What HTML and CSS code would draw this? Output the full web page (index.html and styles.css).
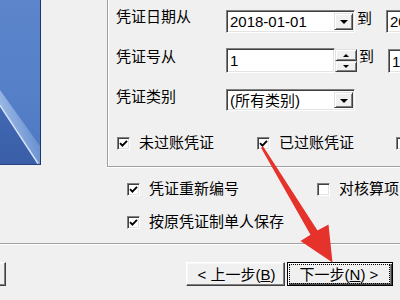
FILE: index.html
```html
<!DOCTYPE html>
<html>
<head>
<meta charset="utf-8">
<link rel="stylesheet" href="styles.css">
</head>
<body>
<div class="dlg">
  <div class="top">
    <div class="banner">
      <svg width="40" height="164" viewBox="0 0 40 164">
        <defs>
          <linearGradient id="bg" x1="0" y1="0" x2="0" y2="1">
            <stop offset="0" stop-color="#5c85cb"/>
            <stop offset="0.6" stop-color="#5580c8"/>
            <stop offset="1" stop-color="#4d78c2"/>
          </linearGradient>
          <linearGradient id="sheen" x1="1" y1="0" x2="0" y2="0.6">
            <stop offset="0" stop-color="#9dbbe8" stop-opacity="0"/>
            <stop offset="1" stop-color="#b9d0f0" stop-opacity="0.9"/>
          </linearGradient>
          <linearGradient id="dark" x1="0" y1="0" x2="0" y2="1">
            <stop offset="0" stop-color="#4268b3"/>
            <stop offset="1" stop-color="#3a5ea8"/>
          </linearGradient>
        </defs>
        <rect width="40" height="164" fill="url(#bg)"/>
        <polygon points="0,90 40,146 40,164 38,164 0,106" fill="url(#sheen)"/>
        <polygon points="0,106 38,164 0,164" fill="url(#dark)"/>
        <line x1="0" y1="105.5" x2="38" y2="163.5" stroke="#d6e4f8" stroke-width="1.4"/>
      </svg>
    </div>
    <div class="group">
      <div class="row r1">
        <span class="lbl">凭证日期从</span>
        <div class="field combo"><span class="val">2018-01-01</span><span class="dd"><i class="tri"></i></span></div>
        <span class="to">到</span>
        <div class="field combo"><span class="val">2018-01-31</span><span class="dd"><i class="tri"></i></span></div>
      </div>
      <div class="row r2">
        <span class="lbl">凭证号从</span>
        <div class="spinbox">
          <div class="field num"><span class="val">1</span></div>
          <div class="spin">
            <span class="sbtn"><i class="tri up"></i></span>
            <span class="sbtn"><i class="tri sm"></i></span>
          </div>
        </div>
        <span class="to">到</span>
        <div class="field num2"><span class="val">100</span></div>
      </div>
      <div class="row r3">
        <span class="lbl">凭证类别</span>
        <div class="field combo short"><span class="val">(所有类别)</span><span class="dd"><i class="tri"></i></span></div>
      </div>
      <div class="checks">
        <label class="chk w140"><span class="box on"><svg width="9" height="9" viewBox="0 0 9 9"><path d="M1 4.2 L3.4 6.6 L8 1.8" fill="none" stroke="#000" stroke-width="1.9"/></svg></span><span>未过账凭证</span></label>
        <label class="chk w139"><span class="box on"><svg width="9" height="9" viewBox="0 0 9 9"><path d="M1 4.2 L3.4 6.6 L8 1.8" fill="none" stroke="#000" stroke-width="1.9"/></svg></span><span>已过账凭证</span></label>
        <label class="chk"><span class="box"></span><span>作废凭证</span></label>
      </div>
    </div>
  </div>

  <div class="opts">
    <div class="orow">
      <label class="chk w190"><span class="box on"><svg width="9" height="9" viewBox="0 0 9 9"><path d="M1 4.2 L3.4 6.6 L8 1.8" fill="none" stroke="#000" stroke-width="1.9"/></svg></span><span>凭证重新编号</span></label>
      <label class="chk"><span class="box"></span><span>对核算项目</span></label>
    </div>
    <div class="orow">
      <label class="chk"><span class="box on"><svg width="9" height="9" viewBox="0 0 9 9"><path d="M1 4.2 L3.4 6.6 L8 1.8" fill="none" stroke="#000" stroke-width="1.9"/></svg></span><span>按原凭证制单人保存</span></label>
    </div>
  </div>

  <div class="sep"></div>

  <div class="btns">
    <button class="btn cut"></button>
    <button class="btn back">&lt; 上一步(<u>B</u>)</button>
    <button class="btn next"><span class="focus">下一步(<u>N</u>) &gt;</span></button>
  </div>
</div>

<svg class="arrow" width="400" height="300" viewBox="0 0 400 300">
  <defs>
    <filter id="soft" x="-10%" y="-10%" width="120%" height="120%"><feGaussianBlur stdDeviation="0.6"/></filter>
  </defs>
  <polygon filter="url(#soft)" fill="#e5302b"
    points="261,147.8 263.2,146.4 317.5,230.5 328.5,224.5 332.5,262.5 300.5,241 310.5,234.8"/>
</svg>
</body>
</html>
```

FILE: styles.css
```css
html, body {
  margin: 0;
  padding: 0;
  width: 400px;
  height: 300px;
  overflow: hidden;
  background: #f0f0f0;
}

body {
  font-family: "Liberation Sans", "Noto Sans CJK SC", sans-serif;
  font-size: 15px;
  line-height: 17px;
  color: #000;
  position: relative;
}

.dlg {
  width: 520px;
}

.top {
  display: flex;
  align-items: flex-start;
  height: 168px;
}

.banner {
  width: 40px;
  height: 164px;
  border-right: 1px solid #1d3768;
  border-bottom: 1px solid #2a4680;
  margin-right: 66px;
  flex: none;
}

.banner svg {
  display: block;
}

.group {
  flex: none;
  width: 400px;
  height: 166px;
  border-left: 1px solid #a0a0a0;
  border-bottom: 1px solid #a0a0a0;
  box-shadow: inset 1px 0 #fff, 0 1px #fff;
  padding-left: 8px;
  box-sizing: content-box;
}

.row {
  display: flex;
  align-items: flex-start;
}

.r1 { margin-top: 10px; height: 23px; }
.r2 { margin-top: 15px; height: 25px; }
.r3 { margin-top: 16px; height: 21px; }

.lbl {
  width: 110px;
  flex: none;
}
.r1 .lbl { margin-top: -2px; }
.r2 .lbl { margin-top: 0; }
.r3 .lbl { margin-top: -1px; }

.to {
  width: 29px;
  padding-left: 2px;
  flex: none;
}

.field {
  box-sizing: border-box;
  background: #fff;
  border: 1px solid;
  border-color: #808080 #fff #fff #808080;
  box-shadow: inset 1px 1px #404040, inset -1px -1px #e3e3e3;
  display: flex;
  align-items: center;
  flex: none;
  overflow: hidden;
}

.val {
  flex: 1;
  padding-left: 3px;
  white-space: nowrap;
}

.combo {
  width: 129px;
  height: 23px;
}

.combo.short {
  height: 22px;
}

.dd {
  width: 19px;
  align-self: stretch;
  margin: 2px 1px 2px 0;
  box-sizing: border-box;
  background: #f0f0f0;
  border: 1px solid;
  border-color: #e3e3e3 #404040 #404040 #e3e3e3;
  box-shadow: inset 1px 1px #fff, inset -1px -1px #808080;
  display: flex;
  align-items: center;
  justify-content: center;
  flex: none;
}

.tri {
  display: block;
  width: 0;
  height: 0;
  border-left: 4px solid transparent;
  border-right: 4px solid transparent;
  border-top: 4px solid #000;
  margin-top: 1px;
}

.tri.sm {
  border-left-width: 3px;
  border-right-width: 3px;
  border-top-width: 3px;
}

.tri.up {
  border-left: 3px solid transparent;
  border-right: 3px solid transparent;
  border-top: 0;
  border-bottom: 3px solid #000;
}

.spinbox {
  display: flex;
  flex: none;
  width: 131px;
}

.num {
  width: 109px;
  height: 25px;
}

.spin {
  width: 22px;
  height: 25px;
  display: flex;
  flex-direction: column;
  padding: 1px 0;
  box-sizing: border-box;
}

.sbtn {
  flex: 1;
  box-sizing: border-box;
  background: #f0f0f0;
  border: 1px solid;
  border-color: #e3e3e3 #404040 #404040 #e3e3e3;
  box-shadow: inset 1px 1px #fff, inset -1px -1px #808080;
  display: flex;
  align-items: center;
  justify-content: center;
}

.num2 {
  width: 100px;
  height: 24px;
  margin-top: 1px;
}

.checks {
  display: flex;
  margin-top: 24px;
  padding-left: 1px;
}

.chk {
  display: flex;
  align-items: center;
  height: 17px;
  gap: 9px;
  white-space: nowrap;
  flex: none;
}

.w139 { width: 139px; }
.w140 { width: 140px; }
.w190 { width: 190px; }

.box {
  width: 13px;
  height: 13px;
  box-sizing: border-box;
  background: #fff;
  border: 1px solid;
  border-color: #808080 #fff #fff #808080;
  box-shadow: inset 1px 1px #404040, inset -1px -1px #e3e3e3;
  display: flex;
  align-items: center;
  justify-content: center;
  flex: none;
  margin-top: 2px;
}

.box svg {
  display: block;
}

.opts {
  padding-left: 127px;
  padding-top: 12px;
}

.orow {
  display: flex;
  height: 17px;
}

.orow + .orow {
  margin-top: 16px;
}

.sep {
  margin-top: 13px;
  width: 400px;
  border-top: 1px solid #a0a0a0;
  border-bottom: 1px solid #fff;
}

.btns {
  display: flex;
  margin-top: 17px;
}

.btn {
  font: inherit;
  color: #000;
  height: 24px;
  padding: 0;
  box-sizing: border-box;
  background: #f0f0f0;
  border: 1px solid;
  border-color: #fff #404040 #404040 #fff;
  box-shadow: inset -1px -1px #808080, inset 1px 1px #f8f8f8;
  display: flex;
  align-items: center;
  justify-content: center;
  white-space: nowrap;
  flex: none;
}

.cut {
  width: 80px;
  margin-left: -74px;
}

.back {
  width: 99px;
  margin-left: 180px;
  padding-left: 2px;
}

.next {
  width: 106px;
  margin-left: 2px;
  border: 1px solid #000;
  box-shadow: inset 1px 1px #fff, inset -1px -1px #404040, inset -2px -2px #808080;
  padding: 1px 2px 1px 1px;
  align-items: stretch;
}

.focus {
  flex: 1;
  border: 1px dotted #000;
  display: flex;
  align-items: center;
  justify-content: center;
  padding-right: 1px;
}

u {
  text-decoration: underline;
  text-underline-offset: 1px;
}

.arrow {
  position: absolute;
  left: 0;
  top: 0;
  pointer-events: none;
}
```
